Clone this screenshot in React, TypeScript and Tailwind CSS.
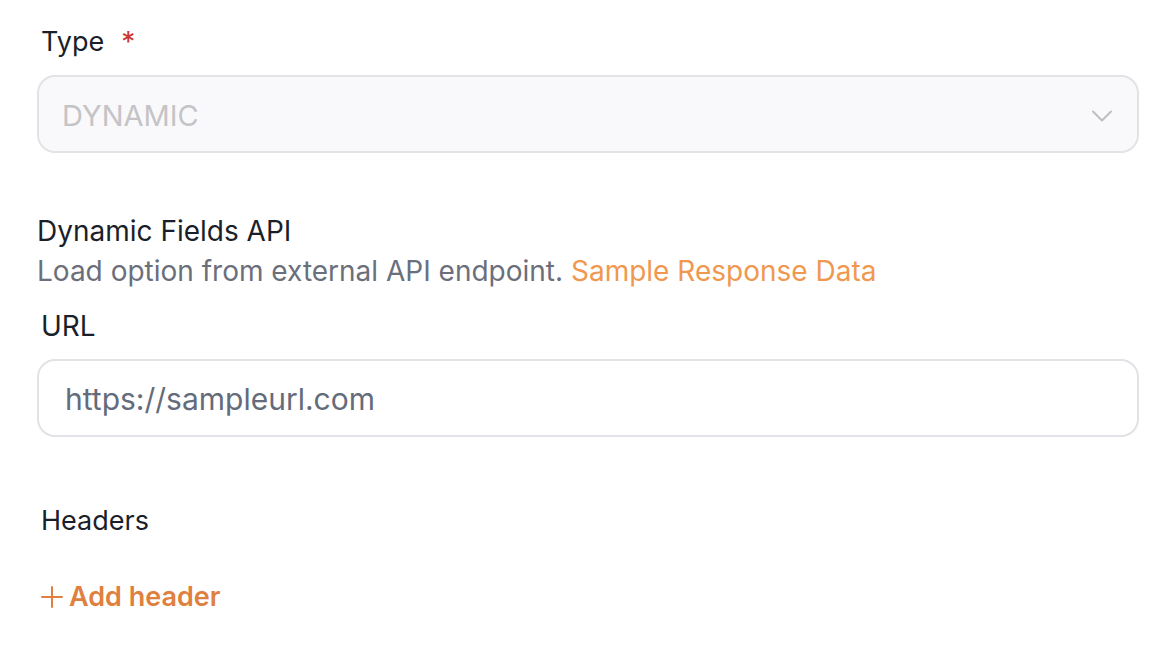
function ChevronDown() {
  return (
    <svg width="22" height="14" viewBox="0 0 22 14" fill="none" className="text-[#bdbdc2]">
      <path d="M2 2.5 L11 11.5 L20 2.5" stroke="currentColor" strokeWidth="2" strokeLinecap="round" strokeLinejoin="round" />
    </svg>
  );
}

function PlusIcon() {
  return (
    <svg width="22" height="22" viewBox="0 0 22 22" fill="none">
      <path d="M11 1 V21 M1 11 H21" stroke="currentColor" strokeWidth="2" strokeLinecap="round" />
    </svg>
  );
}

export default function App() {
  return (
    <div className="min-h-screen w-full bg-white font-['Inter','Liberation_Sans',sans-serif] text-[28px] leading-[40px] text-[#1b1f2a]">
      <div className="ml-[37px] mr-[37px] pt-[22px]">
        <label className="flex items-center pl-[4px]">
          <span className="text-[27px]">Type</span>
          <span className="ml-[17px] text-[#c8372d]">*</span>
        </label>

        <button
          type="button"
          className="mt-[13px] flex h-[78px] w-full items-center justify-between rounded-[18px] border-2 border-[#e3e3e7] bg-[#f9f9fb] pl-[23px] pr-[24px] pt-[3px] text-left"
        >
          <span className="text-[29px] text-[#c4c4c6]">DYNAMIC</span>
          <ChevronDown />
        </button>

        <div className="mt-[58px]">
          <div>Dynamic Fields API</div>
          <p className="text-[#6b6f7b]">
            Load option from external API endpoint.{" "}
            <a className="text-[#f0984f]">Sample Response Data</a>
          </p>
        </div>

        <label className="mt-[15px] block pl-[4px]">URL</label>
        <div className="mt-[13px] flex h-[78px] w-full items-center rounded-[18px] border-2 border-[#e3e3e7] bg-white pl-[26px] pt-[2px] text-[30px] text-[#646b7a]">
          https://sampleurl.com
        </div>

        <div className="mt-[64px] pl-[4px] text-[27px]">Headers</div>

        <button
          type="button"
          className="mt-[36px] flex items-center gap-[6px] pl-[4px] text-[27px] font-semibold text-[#e0803f]"
        >
          <PlusIcon />
          <span>Add header</span>
        </button>
      </div>
    </div>
  );
}
